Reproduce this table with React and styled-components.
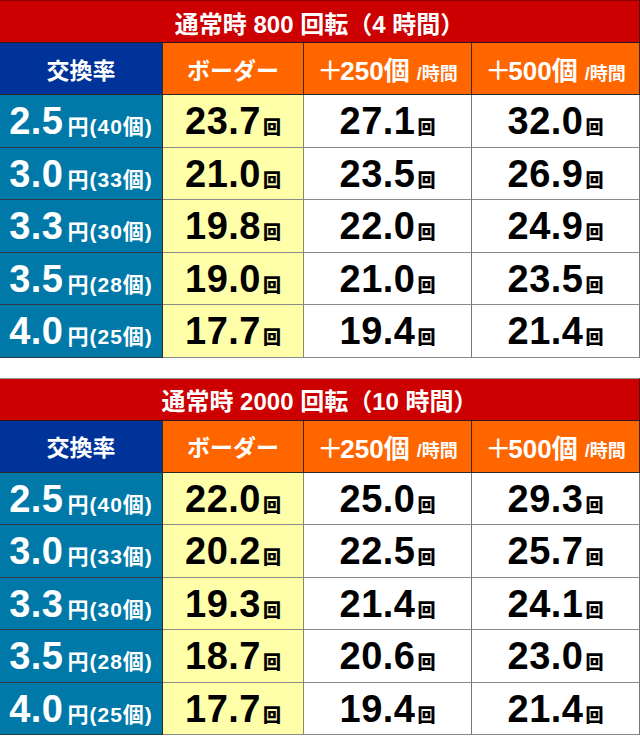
import React from "react";
import styled, { createGlobalStyle } from "styled-components";

const Global = createGlobalStyle`
  html, body { margin: 0; padding: 0; background: #ffffff; }
  body { font-family: "Noto Sans CJK JP", "Noto Sans", sans-serif; }
`;

const MIX = `"Liberation Sans", "Noto Sans CJK JP", sans-serif`;

const Page = styled.div`
  width: 640px;
  display: flex;
  flex-direction: column;
  gap: 20px;
`;

const Table = styled.div`
  display: grid;
  grid-template-columns: 163px 141px 168px 168px;
  grid-auto-rows: auto;
`;

const Title = styled.div`
  grid-column: 1 / -1;
  box-sizing: border-box;
  height: 43px;
  background: #cc0000;
  border-top: 1px solid ${(p) => (p.$first ? "#8a0000" : "#999")};
  border-bottom: 1px solid #2a1a1a;
  border-right: 1px solid #5a0000;
  color: #fff;
  font-family: ${MIX};
  font-weight: 700;
  font-size: 24px;
  display: flex;
  align-items: center;
  justify-content: center;
  padding-top: 1px;
`;

const HeadCell = styled.div`
  box-sizing: border-box;
  height: 52px;
  background: ${(p) => (p.$blue ? "#003399" : "#ff6600")};
  border-right: 1px solid #3a2a1a;
  border-bottom: 1px solid #2a2a2a;
  color: #fff;
  font-family: "Noto Sans CJK JP", sans-serif;
  font-weight: 700;
  font-size: 23px;
  display: flex;
  align-items: center;
  justify-content: center;
  white-space: nowrap;
`;

const HeadBig = styled.span`
  font-family: ${MIX};
  font-size: 26px;
`;

const Plus = styled.span`
  font-family: "Noto Sans CJK JP", sans-serif;
  font-weight: 500;
  margin-right: -3px;
`;

const HeadSmall = styled.span`
  font-family: ${MIX};
  font-size: 18px;
  margin-left: 7px;
  margin-top: 6px;
`;

const RateCell = styled.div`
  box-sizing: border-box;
  height: 52.5px;
  background: #0079a8;
  border-right: 1px solid #2a2a2a;
  border-bottom: 1px solid #2a3a44;
  color: #fff;
  display: flex;
  align-items: baseline;
  justify-content: center;
  padding-top: 3px;
  white-space: nowrap;
`;

const DataCell = styled.div`
  box-sizing: border-box;
  height: 52.5px;
  background: ${(p) => (p.$yellow ? "#ffffaa" : "#ffffff")};
  border-right: 1px solid ${(p) => (p.$yellow ? "#8a8a70" : "#777")};
  border-bottom: 1px solid #8a8a8a;
  color: #000;
  display: flex;
  align-items: baseline;
  justify-content: center;
  padding-top: 3px;
  white-space: nowrap;
`;

const Num = styled.span`
  font-family: "Liberation Sans", Arial, sans-serif;
  font-weight: 700;
  font-size: 38px;
  letter-spacing: 0.5px;
  line-height: 46px;
`;

const Kai = styled.span`
  font-family: "Noto Sans CJK JP", sans-serif;
  font-weight: 900;
  font-size: 18px;
  margin-left: 2px;
`;

const Yen = styled.span`
  font-family: ${MIX};
  font-weight: 700;
  font-size: 21px;
  letter-spacing: 1px;
  margin-left: 4px;
`;

const tables = [
  {
    title: "通常時 800 回転（4 時間）",
    rows: [
      ["2.5", "40", "23.7", "27.1", "32.0"],
      ["3.0", "33", "21.0", "23.5", "26.9"],
      ["3.3", "30", "19.8", "22.0", "24.9"],
      ["3.5", "28", "19.0", "21.0", "23.5"],
      ["4.0", "25", "17.7", "19.4", "21.4"],
    ],
  },
  {
    title: "通常時 2000 回転（10 時間）",
    rows: [
      ["2.5", "40", "22.0", "25.0", "29.3"],
      ["3.0", "33", "20.2", "22.5", "25.7"],
      ["3.3", "30", "19.3", "21.4", "24.1"],
      ["3.5", "28", "18.7", "20.6", "23.0"],
      ["4.0", "25", "17.7", "19.4", "21.4"],
    ],
  },
];

function BorderTable({ data, first }) {
  return (
    <Table>
      <Title $first={first}>{data.title}</Title>
      <HeadCell $blue>交換率</HeadCell>
      <HeadCell>ボーダー</HeadCell>
      <HeadCell>
        <HeadBig>
          <Plus>＋</Plus>250個
        </HeadBig>
        <HeadSmall>/時間</HeadSmall>
      </HeadCell>
      <HeadCell>
        <HeadBig>
          <Plus>＋</Plus>500個
        </HeadBig>
        <HeadSmall>/時間</HeadSmall>
      </HeadCell>
      {data.rows.map((r) => (
        <React.Fragment key={r[0]}>
          <RateCell>
            <Num>{r[0]}</Num>
            <Yen>円({r[1]}個)</Yen>
          </RateCell>
          <DataCell $yellow>
            <Num>{r[2]}</Num>
            <Kai>回</Kai>
          </DataCell>
          <DataCell>
            <Num>{r[3]}</Num>
            <Kai>回</Kai>
          </DataCell>
          <DataCell>
            <Num>{r[4]}</Num>
            <Kai>回</Kai>
          </DataCell>
        </React.Fragment>
      ))}
    </Table>
  );
}

export default function App() {
  return (
    <>
      <Global />
      <Page>
        {tables.map((t, i) => (
          <BorderTable key={i} data={t} first={i === 0} />
        ))}
      </Page>
    </>
  );
}
